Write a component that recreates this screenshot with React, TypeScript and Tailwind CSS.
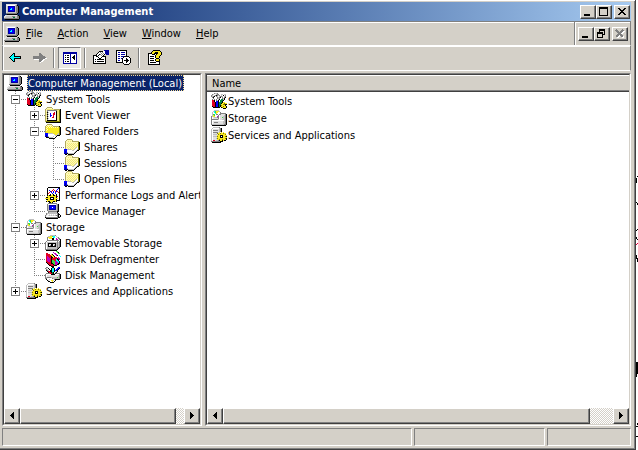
import { useState, type ReactNode } from "react";

const palette: Record<string, string> = {
  k: "#000000",
  g: "#808080",
  d: "#404040",
  s: "#c0c0c0",
  l: "#e0e0e0",
  w: "#ffffff",
  y: "#f8e820",
  p: "#f2e878",
  q: "#fffab8",
  h: "#b0a860",
  o: "#808000",
  b: "#0000ff",
  n: "#0000a0",
  r: "#e00020",
  e: "#008040",
  f: "#40d840",
  c: "#00ffff",
  m: "#c000c0",
};

function PixelIcon({ rows }: { rows: string[] }) {
  return (
    <svg
      width="16"
      height="16"
      viewBox="0 0 16 16"
      shapeRendering="crispEdges"
      aria-hidden="true"
      className="block shrink-0"
    >
      {rows.flatMap((row, y) =>
        [...row].map((ch, x) =>
          palette[ch] ? (
            <rect key={`${x}-${y}`} x={x} y={y} width="1" height="1" fill={palette[ch]} />
          ) : null,
        ),
      )}
    </svg>
  );
}

const computer = [
  "..lllllllllls...",
  "..lwwwwwwwwsgk..",
  "..lsnnnnnnnsggk.",
  "..lsnbbbbbnsggk.",
  "..lsnbbcbbnsggk.",
  "..lsnbccbbnsggk.",
  "..lsnbbbbbnsggk.",
  "..lsnnnnnnnsggk.",
  "..lsssssssssggk.",
  "..gggggggggggk..",
  "...kkkkkkkkkk...",
  ".llllllllllllgk.",
  "llssssssgggssggk",
  "lsssssssseessggk",
  "gggggggggggggggk",
  ".kkkkkkkkkkkkkk.",
];

const systemTools = [
  "...gssg.........",
  ".gswwsgg..ss.ss.",
  "gswsgkgsg.swkwg.",
  "gsgk.gswsggswsg.",
  ".gk...gsgk.gwgk.",
  "..g...gsg..gsk..",
  ".gwg.gwsk.eesk..",
  ".rrk.gsk.eeek...",
  ".rrk.bbk.eek....",
  ".rrrkbbkeeekyy..",
  ".rrrkbbkeekyyoyy",
  ".rrrkbbkeeyyookk",
  ".rrrkbbkekoyyyk.",
  ".krrkbbkekyyoyyk",
  "..kkkkkkk.koyyyk",
  "............kkk.",
];

const eventViewer = [
  "..hhhhh.........",
  ".hqqqqqh........",
  "hqppppppphhhhhhk",
  "hqggggggggggppok",
  "hqgwwwwwwwwkppok",
  "hpkswwwwwrwkppok",
  "hqgwwbwwrrwkppok",
  "hpkswbwwrrwkppok",
  "hqgwwbbwrwwkppok",
  "hpkswbwwrwwkppok",
  "hqgwwwwrrwwkppok",
  "hpkswwwwwwwkppok",
  "hqgwwwwwwwwkppok",
  "hpkkkkkkkkkkppok",
  "hooooooooooooook",
  ".kkkkkkkkkkkkkkk",
];

const yellowShare = [
  "................",
  "..hhhhh.........",
  ".hqqqqqh........",
  "hqyqyqyqhhhhhhk.",
  "hyqyqyqyqyqyqyok",
  "hqyyyyyyyyyyyyok",
  "hyqyyyyyyyyyyyok",
  "hqyyyyyyyyyyyyok",
  "hyyyyyyyyyyyyyok",
  "hyyyyyyyyyyyyyok",
  "bbbsssssyyyyysok",
  "bbbwwwwwwsyyssok",
  "bnbwwwwwwwsskkk.",
  "nnbswwwwswwk....",
  ".kkksssswwk.....",
  "....kkkkkk......",
];

const sharedItem = [
  "...hhhhh........",
  "..hqqqqqh.......",
  ".hqqpqpqhhhhhhh.",
  ".hqqqqqqqqqqqqok",
  ".hqpqpqpqpqpqpok",
  ".hqqpqpqpqpqpqok",
  ".hqpqpqpqpqpqpok",
  ".hqqpqpqpqpqpqok",
  ".hqpqpqpqpqpswok",
  ".hqqpqpqpqpswwok",
  "bbbsssspqpswwsok",
  "bbbwwwwwsswwskk.",
  "bnbwwwwwwwwsk...",
  "bnbswwwwwwsk....",
  "nnnkssssssk.....",
  ".kk.kkkkkk......",
];

const performance = [
  "...kkkkkkkkkkkk.",
  "..kwwwwwwwwwwbk.",
  "..kwwwwwrwwwbwk.",
  "..kwbwwrwrwbwwk.",
  "..kwwbrwbwrbrwk.",
  "..kwrwbwbwbwwrk.",
  "..krwwwbwwbwwwk.",
  "..kwwkwykwwkwwk.",
  "..kykkyykkykwwk.",
  "..yyyyyyyyykrwk.",
  ".kkyykkkkyykwwk.",
  "yyyyykwwkyyyywk.",
  ".kkyykkkkyykwwk.",
  "..yyyyyyyyykkkk.",
  ".kykkyyykkyk....",
  "....kkyk........",
];

const deviceManager = [
  "...ggggggggg....",
  "..gwwwwwwwwsgk..",
  "..gsnnnnnnnsgk..",
  "..gsnbbbbbnsgk..",
  "..gsnbbwbbnsgk..",
  "..gsnbbbbbnsgk..",
  "..gsnnnnnnnsgk..",
  "..gsssssssssgk..",
  "...gggggggggkk..",
  "...gssssssssk...",
  ".gssssssssssgk..",
  ".glwlwlwlwlwgkk.",
  "glwlslslslsggkwk",
  "gwwwwwwwwwwwgksk",
  "kggggggggggggkk.",
  ".kkkkkkkkkkkk...",
];

const storage = [
  "...sssss........",
  "..scfyyys.......",
  ".swcfyywwg......",
  ".swwcywwwgggggg.",
  ".sffwggwggllllgk",
  ".syfwwwgwllllsgk",
  "gsyywwmgwlllssgk",
  "gwlsssggwllfssgk",
  "gwlllllgwlllssgk",
  "gggggggswllsssgk",
  "gwwwwwwwwwwwwsgk",
  "gwllllllllllssgk",
  "gwlgggglllllssgk",
  "gwllllllllllssgk",
  "gssssssssssssggk",
  ".kkkkkkkkkkkkkk.",
];

const removable = [
  ".....sssssg.....",
  "...ssyyfccws....",
  "..gyyyywccwwsg..",
  "..gwyyykkwwmwgg.",
  "..gwwwwkkwwmmwgk",
  "..ggggggggggggwk",
  ".gwwwwwwwwwwgwgk",
  "gwssssssssssgsgk",
  "gwskkkkkkkksgsgk",
  "gwskllkkllksgsgk",
  "gwskwgkkwgksgsgk",
  "gwskkkkkkkksgsgk",
  "gwssssssssssggk.",
  "gwssssssssssgk..",
  "ggggggggggggk...",
  ".kkkkkkkkkkk....",
];

const defrag = [
  "...........ff...",
  "........m...fk..",
  ".rr......mm..ff.",
  ".rrrr.yk..mm....",
  ".rrrrryyk..mk.c.",
  ".rmrrrkyyk.....c",
  ".rmmrrkkyrrr.m..",
  ".rmmmrkrrrrrkmm.",
  ".rmmmrkrrrrckkm.",
  ".rmmmrkffrrcck..",
  ".rrmmrkfffmmcck.",
  ".krrrrkfffmmmck.",
  "..krrrkkffmmmkk.",
  "...krrrrkfmmkk..",
  "....kkrrrkkk....",
  "......kkk.......",
];

const diskManagement = [
  ".gg....kk....bb.",
  "gswk..kcck..bbk.",
  ".gswk.kcck.bbk..",
  ".kgswkkcckbbk...",
  "..krrkkcckwsk...",
  "...krrkekwsk....",
  ".ggggrrekskgggg.",
  "gwwwwwkkkkwwwwgk",
  "gwlllllllllllsgk",
  "gwlllllllllllsgk",
  "gsggggssssssfsgk",
  "ggwwwwwgssssssgk",
  ".kwwswwwwgkkkkk.",
  "..kswwyyswk.....",
  "...kkwwywk......",
  ".....kkkk.......",
];

const services = [
  "..ssssssg.......",
  ".swwwwwwsgk.....",
  "swllllllsgk.....",
  "swggggglsgk.....",
  "swllllllsgk.....",
  "swgggggly.y.y...",
  "swlllloyyoyyoyy.",
  "swssssloyyyyyyo.",
  "swllllyyykkkyyyy",
  "swssssoyyk.kyyok",
  "swllllyyykkkyyyy",
  "swlllsoyyyyyyyok",
  "swllllyyoyyoyyyk",
  "swrrlssgkyykykk.",
  "gggggggggkkk....",
  ".kkkkkkkkk......",
];

const backArrow = [
  "................",
  "................",
  "................",
  ".....kk.........",
  "....kck.........",
  "...kcck.........",
  "..kccckkkkkkk...",
  ".kcccccccccck...",
  "..kccckkkkkkk...",
  "...kcck.........",
  "....kck.........",
  ".....kk.........",
  "................",
];

const forwardArrow = [
  "................",
  "................",
  "................",
  "........gg......",
  "........ggg.....",
  "........gggg....",
  "..gggggggggggg..",
  "..ggggggggggggg.",
  "..ggggggggggggww",
  "...wwwwwggggww..",
  "........gggww...",
  "........ggww....",
  ".........w......",
];

const showTree = [
  "................",
  "................",
  ".nnnnnnnnnnnnnn.",
  ".nnnnnnnnnnnnnn.",
  ".nwwwwwwnwwwwwn.",
  ".nwkwkkwnwwwkwn.",
  ".nwwwwwwnwwkkwn.",
  ".nwkwkkwnwkkkwn.",
  ".nwwwwwwnwwkkwn.",
  ".nwkwkkwnwwwkwn.",
  ".nwwwwwwnwwwwwn.",
  ".nwkwkkwnwwwwwn.",
  ".nwwwwwwnwwwwwn.",
  ".nnnnnnnnnnnnnn.",
];

const properties = [
  "...........nnnnn",
  "......kkkkwwnnnn",
  ".....kwgwgwwnnnn",
  "....kwwwgwgwnnnn",
  "...kwwkgwgwk.nnn",
  "kkkkwkwwgwk.....",
  "kwwkkwwwwkkkk...",
  "kwwwwkwwkwwwk...",
  "kwwwwwkkwwwwk...",
  "kwkwkkkkkkkwk...",
  "kwwwwwwwwwwwk...",
  "kwkwkkkkkkkwk...",
  "kwwwwwwwwwwwk...",
  "kkkkkkkkkkkkk...",
];

const exportList = [
  "kkkkkkkkkkk.....",
  "kwwwwwwwwwk.....",
  "kwnnwnnnnwk.....",
  "kwwwwwwwwwk.....",
  "kwnnwnnnnwk.....",
  "kwwwwwwwwwk.....",
  "kwnnwnnnkkkkk...",
  "kwwwwwwkwwwwwk..",
  "kwnnwnkwwwkwwwk.",
  "kwwwwwkwwwkkwwk.",
  "kwnnwwkwkkkkkwk.",
  "kwwwwwkwwwkkwwk.",
  "kkkkkkkwwwkwwwk.",
  ".......kwwwwwk..",
  "........kkkkk...",
];

const helpIcon = [
  "......kkkkkkk...",
  ".....kyyyyyyyk..",
  "....kyyykkkyyyk.",
  ".kkkkyykkkkyyyk.",
  ".kwwwkkkwkyyyyk.",
  ".kwwwwwwkyyyyk..",
  ".kwkkkkwkyyyk...",
  ".kwwwwwwkyyyk...",
  ".kwkkkkwwkkk....",
  ".kwwwwwwkyyyk...",
  ".kwkkkkwkyyyk...",
  ".kwwwwwwwkkkk...",
  ".kwkkkkkkwwwk...",
  ".kwwwwwwwwwwk...",
  ".kkkkkkkkkkkk...",
];

type Node = { label: string; icon: string[]; children?: Node[]; open?: boolean };

const tree: Node[] = [
  {
    label: "System Tools",
    icon: systemTools,
    open: true,
    children: [
      { label: "Event Viewer", icon: eventViewer, children: [] },
      {
        label: "Shared Folders",
        icon: yellowShare,
        open: true,
        children: [
          { label: "Shares", icon: sharedItem },
          { label: "Sessions", icon: sharedItem },
          { label: "Open Files", icon: sharedItem },
        ],
      },
      { label: "Performance Logs and Alerts", icon: performance, children: [] },
      { label: "Device Manager", icon: deviceManager },
    ],
  },
  {
    label: "Storage",
    icon: storage,
    open: true,
    children: [
      { label: "Removable Storage", icon: removable, children: [] },
      { label: "Disk Defragmenter", icon: defrag },
      { label: "Disk Management", icon: diskManagement },
    ],
  },
  { label: "Services and Applications", icon: services, children: [] },
];

function Connector({ top, bottom, right, box }: { top?: boolean; bottom?: boolean; right?: boolean; box?: "+" | "-" }) {
  return (
    <svg width="19" height="16" viewBox="0 0 19 16" shapeRendering="crispEdges" aria-hidden="true" className="block shrink-0">
      <g stroke="#808080" strokeDasharray="1 1" fill="none">
        {top && <path d="M8.5 0V8" />}
        {bottom && <path d="M8.5 8V16" />}
        {right && <path d="M8 8.5H19" />}
      </g>
      {box && (
        <>
          <rect x="4.5" y="4.5" width="8" height="8" fill="#fff" stroke="#808080" />
          <path d={box === "+" ? "M6 8.5H11M8.5 6V11" : "M6 8.5H11"} stroke="#000" />
        </>
      )}
    </svg>
  );
}

function TreeItem({ node, guides, last }: { node: Node; guides: boolean[]; last: boolean }) {
  const [open, setOpen] = useState(Boolean(node.open));
  const mark = <Connector top bottom={!last} right box={node.children ? (open ? "-" : "+") : undefined} />;
  return (
    <li>
      <div className="flex h-4 items-center">
        {guides.map((line, i) => (
          <Connector key={i} top={line} bottom={line} />
        ))}
        {node.children ? (
          <button type="button" aria-label={`Toggle ${node.label}`} aria-expanded={open} onClick={() => setOpen(!open)}>
            {mark}
          </button>
        ) : (
          mark
        )}
        <PixelIcon rows={node.icon} />
        <span className="ml-1 pt-0.5 leading-3.5 whitespace-nowrap">{node.label}</span>
      </div>
      {open && node.children && node.children.length > 0 && (
        <ul>
          {node.children.map((child, i) => (
            <TreeItem
              key={child.label}
              node={child}
              guides={[...guides, !last]}
              last={i === node.children!.length - 1}
            />
          ))}
        </ul>
      )}
    </li>
  );
}

const raised =
  "border border-t-white border-l-white border-r-[#404040] border-b-[#404040] shadow-[inset_-1px_-1px_0_#808080] bg-[#d4d0c8]";

function CaptionButton({ label, children, disabled }: { label: string; children: ReactNode; disabled?: boolean }) {
  return (
    <button type="button" aria-label={label} disabled={disabled} className={`h-3.5 w-4 shrink-0 ${raised}`}>
      <svg width="14" height="12" viewBox="0 0 14 12" shapeRendering="crispEdges" aria-hidden="true" className="block">
        {children}
      </svg>
    </button>
  );
}

function ScrollBar({ thumb }: { thumb: string }) {
  return (
    <div className="flex h-4 shrink-0 bg-[repeating-conic-gradient(#fff_0_25%,#d4d0c8_0_50%)] bg-[length:2px_2px]">
      <button type="button" aria-label="Scroll left" className={`size-4 shrink-0 ${raised}`}>
        <svg width="14" height="14" viewBox="0 0 14 14" shapeRendering="crispEdges" aria-hidden="true" className="block">
          <path d="M8 3h1v7h-1zM7 4h1v5h-1zM6 5h1v3h-1zM5 6h1v1h-1z" />
        </svg>
      </button>
      <div className="flex flex-1">
        <div className={`${thumb} ${raised}`} />
      </div>
      <button type="button" aria-label="Scroll right" className={`size-4 shrink-0 ${raised}`}>
        <svg width="14" height="14" viewBox="0 0 14 14" shapeRendering="crispEdges" aria-hidden="true" className="block">
          <path d="M5 3h1v7h-1zM6 4h1v5h-1zM7 5h1v3h-1zM8 6h1v1h-1z" />
        </svg>
      </button>
    </div>
  );
}

function Pane({ className, children }: { className: string; children: ReactNode }) {
  return (
    <section
      className={`border border-t-[#808080] border-l-[#808080] border-r-white border-b-white ${className}`}
    >
      <div className="flex h-full flex-col overflow-hidden border border-t-[#404040] border-l-[#404040] border-r-[#d4d0c8] border-b-[#d4d0c8] bg-white">
        {children}
      </div>
    </section>
  );
}

function ToolButton({ label, rows, pressed }: { label: string; rows: string[]; pressed?: boolean }) {
  return (
    <button
      type="button"
      aria-label={label}
      aria-pressed={pressed}
      className={`flex h-[22px] w-[23px] items-center justify-center border ${
        pressed
          ? "border-t-[#808080] border-l-[#808080] border-r-white border-b-white bg-[#eae8e4]"
          : "border-transparent"
      }`}
    >
      <PixelIcon rows={rows} />
    </button>
  );
}

function Divider() {
  return <span className="mx-[3px] h-5 w-0.5 border-l border-l-[#808080] bg-white" />;
}

const menus = ["File", "Action", "View", "Window", "Help"];
const groove = "border border-t-[#808080] border-l-[#808080] border-r-[#808080] border-b-white";

export default function App() {
  return (
    <div className="flex h-screen bg-white font-['Tahoma','DejaVu_Sans_Condensed',sans-serif] text-[11px] leading-4 text-black">
      <main className="flex min-w-0 flex-1 flex-col border-r border-b border-[#404040] bg-[#d4d0c8] shadow-[inset_0_1px_0_#fff,inset_-1px_-1px_0_#808080]">
        <div className="flex min-h-0 flex-1 flex-col pt-0.5 pr-1 pb-[3px] pl-0.5">
          <header className="flex h-[19px] shrink-0 items-center gap-0.5 bg-linear-to-r from-[#0a246a] to-[#a6caf0] pr-px pl-0.5">
            <PixelIcon rows={computer} />
            <h1 className="flex-1 font-bold text-white">Computer Management</h1>
            <div className="flex">
              <CaptionButton label="Minimize">
                <path d="M3 8h6v2h-6z" />
              </CaptionButton>
              <CaptionButton label="Maximize">
                <path fillRule="evenodd" d="M2 1h9v9h-9zM3 3v6h7v-6z" />
              </CaptionButton>
            </div>
            <CaptionButton label="Close">
              <path d="M3 2h2v1h1v1h2v-1h1v-1h2v1h-1v1h-1v1h-1v1h1v1h1v1h1v1h-2v-1h-1v-1h-2v1h-1v1h-2v-1h1v-1h1v-1h1v-1h-1v-1h-1v-1h-1z" />
            </CaptionButton>
          </header>

          <div className={`flex h-[25px] shrink-0 ${groove} shadow-[inset_1px_1px_0_#fff]`}>
            <nav className="flex flex-1 items-center pl-px">
              <PixelIcon rows={computer} />
              <div className="flex gap-[15px] pt-px pl-1.5">
                {menus.map((name) => (
                  <button type="button" key={name}>
                    <span className="underline underline-offset-1">{name[0]}</span>
                    {name.slice(1)}
                  </button>
                ))}
              </div>
            </nav>
            <div className="flex items-center gap-0.5 border-l border-l-[#808080] pr-0.5 pl-[3px] shadow-[inset_1px_1px_0_#fff]">
              <div className="flex">
                <CaptionButton label="Minimize document">
                  <path d="M3 8h6v2h-6z" />
                </CaptionButton>
                <CaptionButton label="Restore document">
                  <path fillRule="evenodd" d="M4 1h6v6h-2v3h-6v-6h2zM5 3v1h3v2h1v-3zM3 6v3h4v-3z" />
                </CaptionButton>
              </div>
              <CaptionButton label="Close document" disabled>
                <path d="M4 3l7 7M11 3l-7 7" stroke="#fff" strokeWidth="2" />
                <path d="M3 2l7 7M10 2l-7 7" stroke="#808080" strokeWidth="2" />
              </CaptionButton>
            </div>
          </div>

          <div className={`flex h-[25px] shrink-0 items-center border-t-0 pl-px ${groove} shadow-[inset_1px_1px_0_#fff]`}>
            <ToolButton label="Back" rows={backArrow} />
            <ToolButton label="Forward" rows={forwardArrow} />
            <Divider />
            <ToolButton label="Show/Hide Console Tree" rows={showTree} pressed />
            <Divider />
            <ToolButton label="Properties" rows={properties} />
            <ToolButton label="Export List" rows={exportList} />
            <Divider />
            <ToolButton label="Help" rows={helpIcon} />
          </div>

          <div className="flex min-h-0 flex-1 gap-[3px] py-0.5">
            <Pane className="w-[200px] shrink-0">
              <div className="min-h-0 flex-1 overflow-hidden pl-[3px]">
                <div className="flex h-4 items-center">
                  <PixelIcon rows={computer} />
                  <span className="ml-1 bg-[#0a246a] pt-0.5 pr-0.5 pl-px leading-3.5 whitespace-nowrap text-white outline-1 -outline-offset-1 outline-[#f5db95] outline-dotted">
                    Computer Management (Local)
                  </span>
                </div>
                <ul>
                  {tree.map((node, i) => (
                    <TreeItem key={node.label} node={node} guides={[]} last={i === tree.length - 1} />
                  ))}
                </ul>
              </div>
              <ScrollBar thumb="w-[95%]" />
            </Pane>
            <Pane className="min-w-0 flex-1">
              <div className="min-h-0 flex-1">
                <table className="w-full border-collapse">
                  <thead>
                    <tr>
                      <th className="border-b border-b-[#404040] bg-[#d4d0c8] pt-0.5 pr-0 pb-0 pl-[5px] text-left leading-3.5 font-normal shadow-[inset_0_1px_0_#fff,inset_0_-1px_0_#808080]">
                        Name
                      </th>
                    </tr>
                  </thead>
                  <tbody>
                    {tree.map((node) => (
                      <tr key={node.label}>
                        <td className="p-0 pl-1">
                          <div className="flex h-[17px] items-center gap-px">
                            <PixelIcon rows={node.icon} />
                            <span className="pt-0.5 leading-3.5">{node.label}</span>
                          </div>
                        </td>
                      </tr>
                    ))}
                  </tbody>
                </table>
              </div>
              <ScrollBar thumb="w-[94%]" />
            </Pane>
          </div>

          <footer className="flex h-[18px] shrink-0 gap-0.5">
            <div className="flex-1 border border-t-[#808080] border-l-[#808080] border-r-white border-b-white" />
            <div className="w-[131px] border border-t-[#808080] border-l-[#808080] border-r-white border-b-white" />
            <div className="w-[84px] border border-t-[#808080] border-l-[#808080] border-r-white border-b-white" />
          </footer>
        </div>
      </main>
      <svg width="2" height="450" viewBox="0 0 2 450" shapeRendering="crispEdges" aria-hidden="true" className="block shrink-0">
        <path d="M1 176h1v1h-1zM0 178h1v5h-1zM0 202h1v1h-1zM1 203h1v2h-1zM1 229h1v1h-1zM0 230h1v1h-1zM0 237h1v2h-1zM1 239h1v1h-1zM0 255h1v4h-1zM1 258h1v4h-1zM0 362h2v12h-2zM0 374h1v3h-1zM1 423h1v2h-1zM0 426h2v1h-2zM0 436h2v1h-2z" />
        <path d="M0 244h1v1h-1zM1 243h1v1h-1z" fill="#e00040" />
      </svg>
    </div>
  );
}
